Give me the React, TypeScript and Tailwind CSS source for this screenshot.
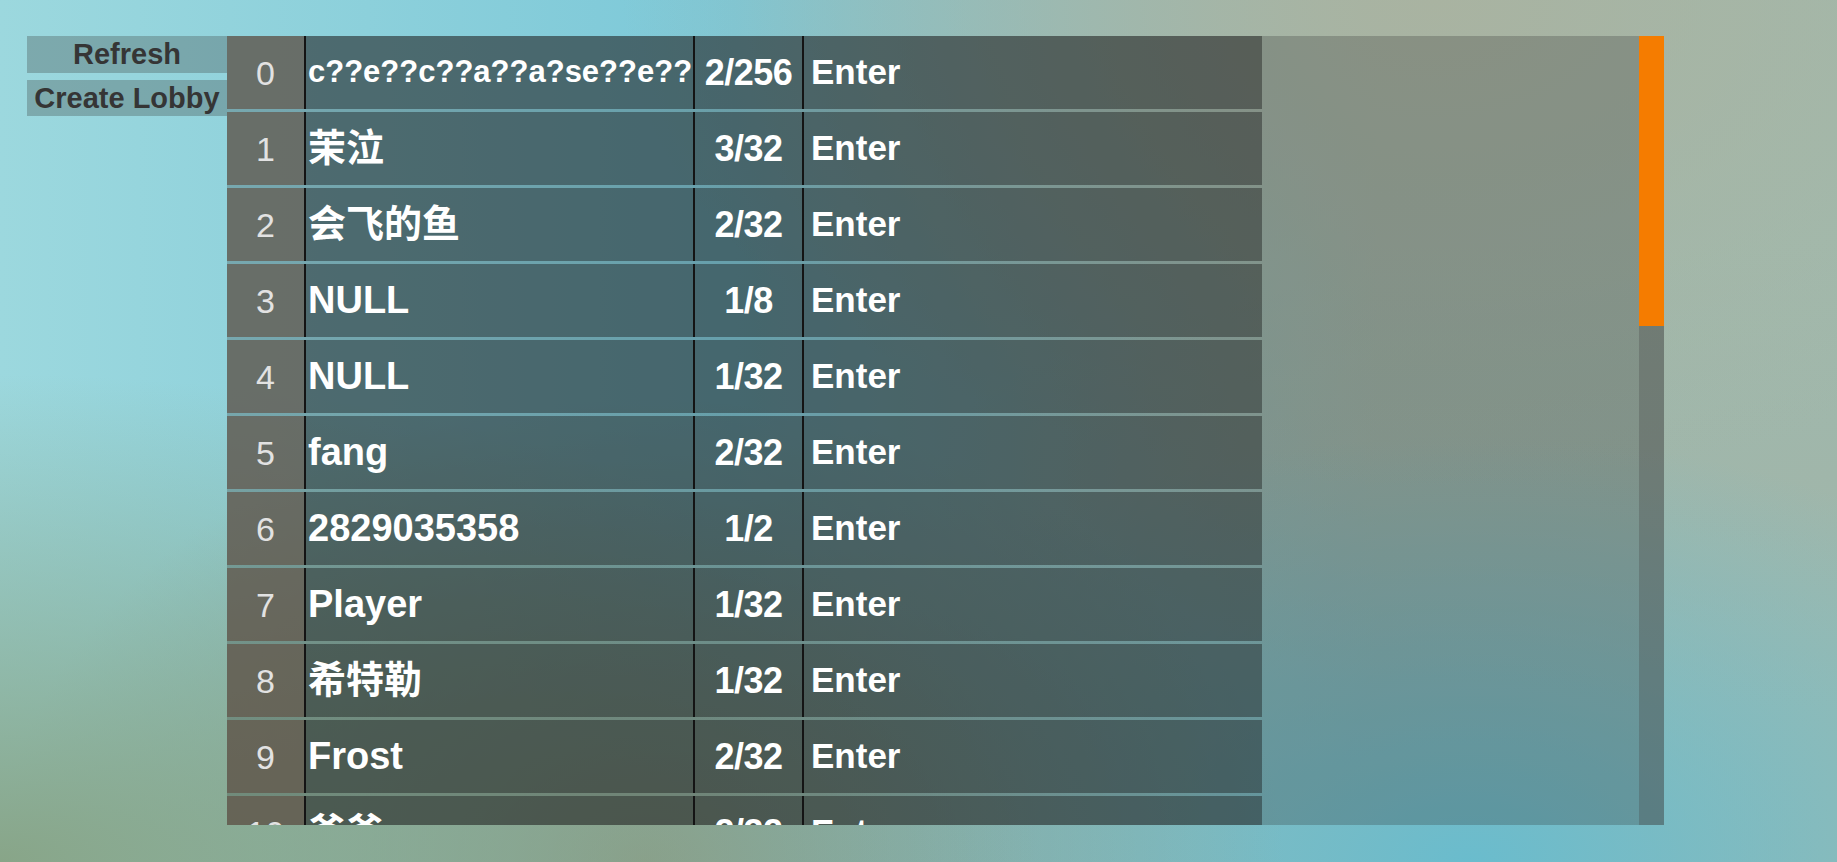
const lobbies = [
  { id: 0, name: "c??e??c??a??a?se??e??", count: "2/256", small: true },
  { id: 1, name: "茉泣", count: "3/32" },
  { id: 2, name: "会飞的鱼", count: "2/32" },
  { id: 3, name: "NULL", count: "1/8" },
  { id: 4, name: "NULL", count: "1/32" },
  { id: 5, name: "fang", count: "2/32" },
  { id: 6, name: "2829035358", count: "1/2" },
  { id: 7, name: "Player", count: "1/32" },
  { id: 8, name: "希特勒", count: "1/32" },
  { id: 9, name: "Frost", count: "2/32" },
  { id: 10, name: "爸爸", count: "2/32" },
];

const font = "font-['Liberation_Sans','Noto_Sans_CJK_SC',sans-serif]";

function LobbyRow({ id, name, count, small }: { id: number; name: string; count: string; small?: boolean }) {
  return (
    <div className="flex h-[73px] w-[1035px] shrink-0 bg-[rgba(25,25,25,0.42)]">
      {/* index */}
      <div className="flex w-[77px] items-center justify-center bg-[rgba(140,115,95,0.42)] pt-[1px] text-[34px] text-[#e2e2e2]">
        {id}
      </div>
      <div className="w-[2px] bg-[#141414]" />
      <div
        className={`flex w-[387px] items-center overflow-hidden whitespace-nowrap pl-[2px] font-bold text-white ${
          small ? "text-[31px]" : "text-[38px]"
        }`}
      >
        {name}
      </div>
      <div className="w-[2px] bg-[#141414]" />
      <div className="flex w-[107px] items-center justify-center text-[36px] font-bold tracking-[-0.5px] text-white">
        {count}
      </div>
      <div className="w-[2px] bg-[#141414]" />
      <div className="flex flex-1 items-center pl-[7px] text-[35px] font-bold text-white">Enter</div>
    </div>
  );
}

export default function App() {
  return (
    <div
      className={`${font} flex h-[862px] w-[1837px] overflow-hidden bg-[radial-gradient(ellipse_at_78%_0%,#a9b3a1_0%,transparent_40%),radial-gradient(ellipse_at_0%_100%,#88a588_0%,transparent_40%),radial-gradient(ellipse_at_35%_100%,#8a9e8c_0%,transparent_38%),radial-gradient(ellipse_at_80%_100%,#6abccd_0%,transparent_35%),radial-gradient(ellipse_at_100%_55%,#a0b6aa_0%,transparent_35%),linear-gradient(90deg,#9cd8de_0%,#7cc8d8_40%,#9fb8ad_75%,#a0baae_100%)] pl-[27px] pt-[36px]`}
    >
      {/* menu buttons */}
      <div className="flex w-[200px] flex-col gap-[7px]">
        <button className="h-[37px] bg-[rgba(80,100,100,0.4)] text-[29px] leading-[37px] font-bold text-[#353535]">
          Refresh
        </button>
        <button className="h-[36px] bg-[rgba(80,100,100,0.4)] text-[29px] leading-[36px] font-bold text-[#353535]">
          Create Lobby
        </button>
      </div>

      {/* lobby list scroll view */}
      <div className="flex h-[789px] w-[1437px] bg-[rgba(40,40,40,0.25)]">
        <div className="flex flex-1 flex-col gap-[3px] overflow-hidden">
          {lobbies.map((l) => (
            <LobbyRow key={l.id} {...l} />
          ))}
        </div>
        <div className="flex w-[25px] flex-col bg-[rgba(70,70,70,0.3)]">
          <div className="h-[290px] bg-[#f57c00]" />
        </div>
      </div>
    </div>
  );
}
